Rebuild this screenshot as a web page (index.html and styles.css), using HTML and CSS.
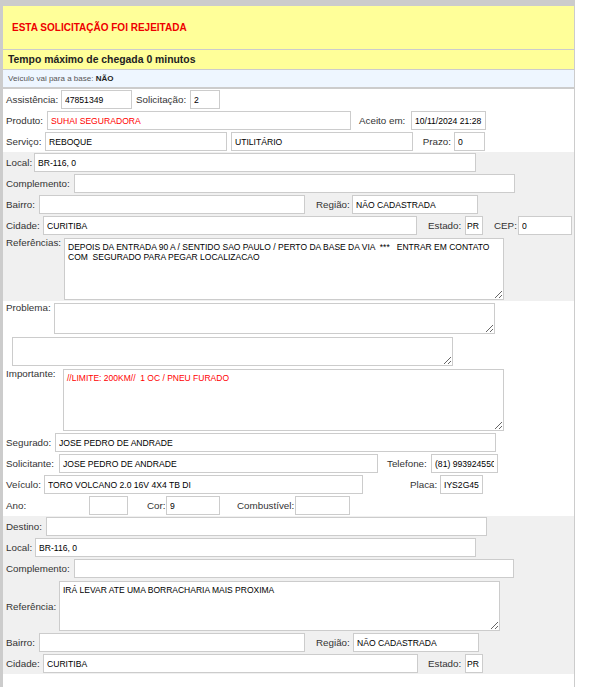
FILE: index.html
```html
<!DOCTYPE html>
<html lang="pt-BR">
<head>
<meta charset="utf-8">
<title>Solicitação</title>
<link rel="stylesheet" href="styles.css">
</head>
<body>
<div class="frame">
  <div class="alert">ESTA SOLICITAÇÃO FOI REJEITADA</div>
  <div class="tempo">Tempo máximo de chegada 0 minutos</div>
  <div class="base">Veículo vai para a base:&nbsp;<b>NÃO</b></div>

  <div class="section">
    <div class="row">
      <span class="lab w55">Assistência:</span><input class="in w71" value="47851349" readonly>
      <span class="lab w54 ml4">Solicitação:</span><input class="in w30" value="2" readonly>
    </div>
    <div class="row">
      <span class="lab w41">Produto:</span><input class="in w304 red" value="SUHAI SEGURADORA" readonly>
      <span class="lab w52 ml8">Aceito em:</span><input class="in w75" value="10/11/2024 21:28" readonly>
    </div>
    <div class="row">
      <span class="lab w39">Serviço:</span><input class="in w182" value="REBOQUE" readonly>
      <input class="in w182 ml4" value="UTILITÁRIO" readonly>
      <span class="lab w41 right">Prazo:</span><input class="in w31" value="0" readonly>
    </div>
  </div>

  <div class="section gray">
    <div class="row">
      <span class="lab w28">Local:</span><input class="in w442" value="BR-116, 0" readonly>
    </div>
    <div class="row">
      <span class="lab w68">Complemento:</span><input class="in w441" value="" readonly>
    </div>
    <div class="row">
      <span class="lab w33">Bairro:</span><input class="in w266" value="" readonly>
      <span class="lab w36 ml11">Região:</span><input class="in w126" value="NÃO CADASTRADA" readonly>
    </div>
    <div class="row">
      <span class="lab w37">Cidade:</span><input class="in w374" value="CURITIBA" readonly>
      <span class="lab w37 ml11">Estado:</span><input class="in w18 tight" value="PR" readonly>
      <span class="lab w24 ml11">CEP:</span><input class="in w54" value="0" readonly>
    </div>
    <div class="row top">
      <span class="lab w58 pt">Referências:</span><textarea class="ta w440 h62" readonly>DEPOIS DA ENTRADA 90 A / SENTIDO SAO PAULO / PERTO DA BASE DA VIA  ***   ENTRAR EM CONTATO COM  SEGURADO PARA PEGAR LOCALIZACAO</textarea>
    </div>
  </div>

  <div class="section">
    <div class="row top">
      <span class="lab w48 pt">Problema:</span><textarea class="ta w441 h31" readonly></textarea>
    </div>
    <div class="row top">
      <textarea class="ta w441 h29 ml6" readonly></textarea>
    </div>
    <div class="row top">
      <span class="lab w57 pt">Importante:</span><textarea class="ta w441 h62 red" readonly>//LIMITE: 200KM//  1 OC / PNEU FURADO</textarea>
    </div>
    <div class="row">
      <span class="lab w49">Segurado:</span><input class="in w441" value="JOSE PEDRO DE ANDRADE" readonly>
    </div>
    <div class="row">
      <span class="lab w53">Solicitante:</span><input class="in w319" value="JOSE PEDRO DE ANDRADE" readonly>
      <span class="lab w44 ml9">Telefone:</span><input class="in w67" value="(81) 993924550" readonly>
    </div>
    <div class="row">
      <span class="lab w38">Veículo:</span><input class="in w319" value="TORO VOLCANO 2.0 16V 4X4 TB DI" readonly>
      <span class="lab w30 ml47">Placa:</span><input class="in w43" value="IYS2G45" readonly>
    </div>
    <div class="row">
      <span class="lab w83">Ano:</span><input class="in w39" value="" readonly>
      <span class="lab w19 ml19">Cor:</span><input class="in w54" value="9" readonly>
      <span class="lab w58 ml17">Combustível:</span><input class="in w55" value="" readonly>
    </div>
  </div>

  <div class="section gray">
    <div class="row">
      <span class="lab w40">Destino:</span><input class="in w441" value="" readonly>
    </div>
    <div class="row">
      <span class="lab w29">Local:</span><input class="in w441" value="BR-116, 0" readonly>
    </div>
    <div class="row">
      <span class="lab w68">Complemento:</span><input class="in w440" value="" readonly>
    </div>
    <div class="row tarow">
      <span class="lab w53">Referência:</span><textarea class="ta w441 h50" readonly>IRÁ LEVAR ATE UMA BORRACHARIA MAIS PROXIMA</textarea>
    </div>
    <div class="row">
      <span class="lab w33">Bairro:</span><input class="in w266" value="" readonly>
      <span class="lab w37 ml11">Região:</span><input class="in w126" value="NÃO CADASTRADA" readonly>
    </div>
    <div class="row">
      <span class="lab w37">Cidade:</span><input class="in w375" value="CURITIBA" readonly>
      <span class="lab w37 ml10">Estado:</span><input class="in w18 tight" value="PR" readonly>
    </div>
  </div>
</div>
</body>
</html>
```
FILE: styles.css
```css
html, body {
  margin: 0;
  padding: 0;
  background: #ffffff;
  font-family: "Liberation Sans", Arial, sans-serif;
}

.frame {
  width: 571px;
  border-top: 6px solid #cccccc;
  border-left: 3px solid #cccccc;
  border-right: 1px solid #cccccc;
  padding-bottom: 40px;
}

.alert {
  height: 43px;
  background: #ffff99;
  border-bottom: 1px solid #cccccc;
  display: flex;
  align-items: center;
  padding-left: 9px;
  color: #ee0000;
  font-weight: bold;
  font-size: 10px;
}

.tempo {
  height: 19px;
  background: #ffff99;
  border-bottom: 1px solid #cccccc;
  display: flex;
  align-items: center;
  padding-left: 5px;
  color: #222222;
  font-weight: bold;
  font-size: 10.4px;
}

.base {
  height: 17px;
  background: #eef6ff;
  border-bottom: 2px solid #cccccc;
  display: flex;
  align-items: center;
  padding-left: 5px;
  color: #555555;
  font-size: 8px;
}

.base b {
  color: #222222;
}

.section {
  background: #ffffff;
}

.section.gray {
  background: #f0f0f0;
}

.row {
  display: flex;
  align-items: center;
  padding: 1px 0 1px 3px;
}

.row.top {
  align-items: flex-start;
  padding: 2px 0 1px 3px;
}

.row.tarow {
  padding: 2px 0 1px 3px;
}

.lab {
  flex: none;
  font-size: 9.8px;
  color: #333333;
  white-space: nowrap;
  line-height: 19px;
}

.lab.pt {
  line-height: 10px;
  padding-top: 0;
}

.lab.right {
  text-align: right;
  padding-right: 3px;
  box-sizing: border-box;
}

.in {
  flex: none;
  box-sizing: border-box;
  height: 19px;
  margin: 0;
  padding: 0 3px;
  border: 1px solid #cccccc;
  border-radius: 0;
  background: #ffffff;
  color: #000000;
  font-family: "Liberation Sans", Arial, sans-serif;
  font-size: 8.6px;
  outline: none;
}

.in.tight {
  padding: 0 1px;
}

.ta {
  flex: none;
  box-sizing: border-box;
  margin: 0;
  padding: 3px;
  border: 1px solid #cccccc;
  border-radius: 0;
  background: #ffffff;
  color: #000000;
  font-family: "Liberation Sans", Arial, sans-serif;
  font-size: 8.5px;
  line-height: 10px;
  resize: both;
  outline: none;
}

.red {
  color: #ff0000;
}

.ml4 { margin-left: 4px; }
.ml6 { margin-left: 6px; }
.ml8 { margin-left: 8px; }
.ml9 { margin-left: 9px; }
.ml10 { margin-left: 10px; }
.ml11 { margin-left: 11px; }
.ml17 { margin-left: 17px; }
.ml19 { margin-left: 19px; }
.ml47 { margin-left: 47px; }

.w18 { width: 18px; }
.w19 { width: 19px; }
.w24 { width: 24px; }
.w28 { width: 28px; }
.w29 { width: 29px; }
.w30 { width: 30px; }
.w31 { width: 31px; }
.w33 { width: 33px; }
.w36 { width: 36px; }
.w37 { width: 37px; }
.w38 { width: 38px; }
.w39 { width: 39px; }
.w40 { width: 40px; }
.w41 { width: 41px; }
.w43 { width: 43px; }
.w44 { width: 44px; }
.w48 { width: 48px; }
.w49 { width: 49px; }
.w52 { width: 52px; }
.w53 { width: 53px; }
.w54 { width: 54px; }
.w55 { width: 55px; }
.w57 { width: 57px; }
.w58 { width: 58px; }
.w67 { width: 67px; }
.w68 { width: 68px; }
.w71 { width: 71px; }
.w75 { width: 75px; }
.w83 { width: 83px; }
.w126 { width: 126px; }
.w182 { width: 182px; }
.w266 { width: 266px; }
.w304 { width: 304px; }
.w319 { width: 319px; }
.w374 { width: 374px; }
.w375 { width: 375px; }
.w440 { width: 440px; }
.w441 { width: 441px; }
.w442 { width: 442px; }

.h29 { height: 29px; }
.h31 { height: 31px; }
.h50 { height: 50px; }
.h62 { height: 62px; }
```
